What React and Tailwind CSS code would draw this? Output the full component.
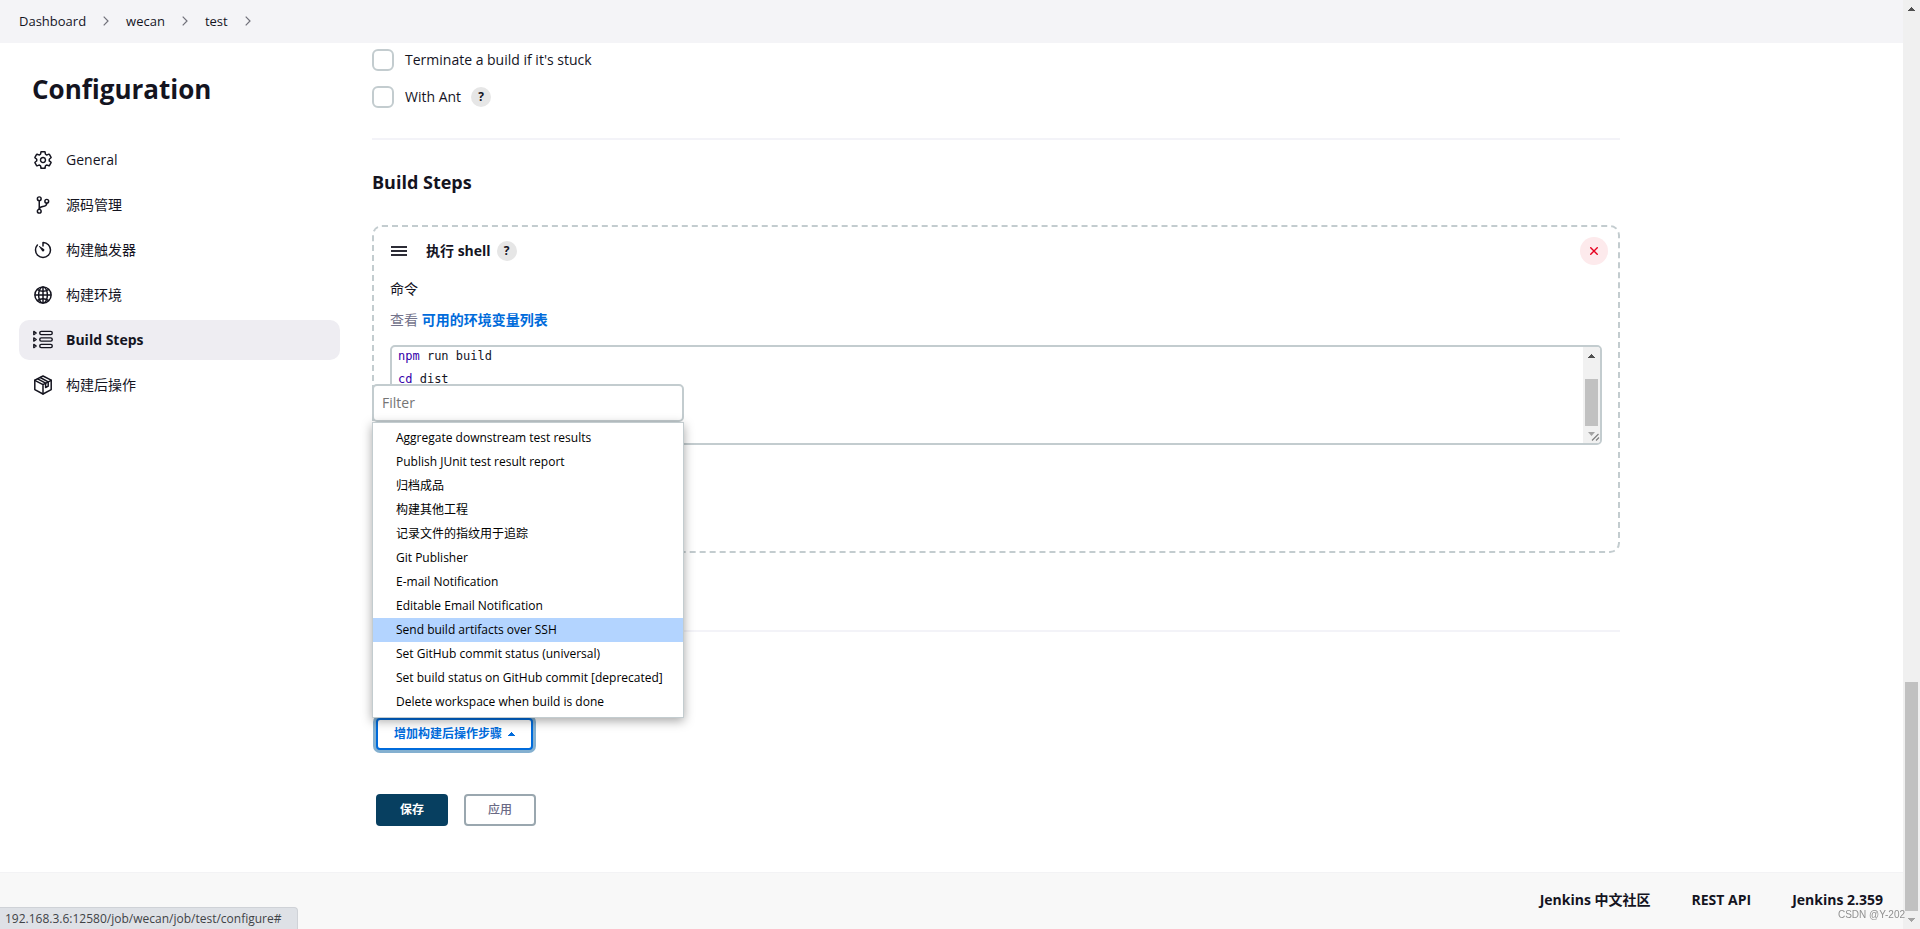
import React from "react";
import {
  IoSettingsOutline,
  IoGitBranchOutline,
  IoTimerOutline,
  IoGlobeOutline,
} from "react-icons/io5";

const crumbs = ["Dashboard", "wecan", "test"];

function StepsIcon() {
  return (
    <svg viewBox="0 0 20 20" className="h-5 w-5" fill="none" stroke="currentColor" strokeWidth="1.4" strokeLinejoin="round" aria-hidden="true">
      {[3, 9.5, 16].map((y) => (
        <g key={y}>
          <path d={`M0.8 ${y - 1.6}L3.2 ${y}L0.8 ${y + 1.6}Z`} />
          <rect x="6.8" y={y - 1.6} width="12.4" height="3.2" rx="1.4" />
        </g>
      ))}
    </svg>
  );
}

function PackageIcon() {
  return (
    <svg viewBox="0 0 20 20" className="h-5 w-5" fill="none" stroke="currentColor" strokeWidth="1.5" strokeLinejoin="round" strokeLinecap="round" aria-hidden="true">
      <path d="M10 1L18.2 5.2V14.6L10 19L1.8 14.6V5.2Z" />
      <path d="M1.8 5.4L10 9.6L18.2 5.4M10 9.6V19" />
      <path d="M4.6 3.9L12.6 8.2V12.6L15.2 11.2V6.8L7.2 2.5" />
    </svg>
  );
}

const outline = "h-5 w-5 [&_[stroke-width]]:[stroke-width:38px]";

const nav = [
  { label: "General", icon: <IoSettingsOutline className={outline} /> },
  { label: "源码管理", icon: <IoGitBranchOutline className={outline} /> },
  { label: "构建触发器", icon: <IoTimerOutline className={outline} /> },
  { label: "构建环境", icon: <IoGlobeOutline className={outline} /> },
  { label: "Build Steps", icon: <StepsIcon />, active: true },
  { label: "构建后操作", icon: <PackageIcon /> },
];

const postBuildActions = [
  "Aggregate downstream test results",
  "Publish JUnit test result report",
  "归档成品",
  "构建其他工程",
  "记录文件的指纹用于追踪",
  "Git Publisher",
  "E-mail Notification",
  "Editable Email Notification",
  "Send build artifacts over SSH",
  "Set GitHub commit status (universal)",
  "Set build status on GitHub commit [deprecated]",
  "Delete workspace when build is done",
];

function Arrow({ down, className = "" }) {
  return (
    <svg viewBox="0 0 7 4" className={`h-1 w-[7px] shrink-0 ${className}`} fill="currentColor" shapeRendering="crispEdges" aria-hidden="true">
      <path d={down ? "M0 0H7L3.5 4Z" : "M3.5 0L7 4H0Z"} />
    </svg>
  );
}

function Help() {
  return (
    <button type="button" aria-label="Help" className="flex h-5 w-5 items-center justify-center rounded-full bg-[#e6e6e6] text-xs font-bold">
      ?
    </button>
  );
}

function CheckRow({ id, label, help }) {
  return (
    <div className="flex h-[22px] items-center">
      <input id={id} type="checkbox" className="h-[22px] w-[22px] appearance-none rounded-md border-2 border-[#c3cccf] bg-white" />
      <label htmlFor={id} className="pl-[11px] pr-[10px]">{label}</label>
      {help && <Help />}
    </div>
  );
}

function PostBuildMenu() {
  return (
    <div className="absolute bottom-full -left-1 z-10 w-[312px]">
      <input
        type="text"
        aria-label="Filter"
        placeholder="Filter"
        className="block h-[38px] w-full rounded-[5px] border-2 border-[#c3cccf] bg-white px-2 pb-[2px] text-sm outline-none placeholder:text-[#757575]"
      />
      <ul className="border border-[#c3cccf] bg-white py-[3px] text-xs text-black shadow-[0_3px_10px_rgba(0,0,0,0.35)]">
        {postBuildActions.map((name) => (
          <li key={name}>
            <button
              type="button"
              className={`block h-6 w-full whitespace-nowrap pl-[23px] text-left ${name === "Send build artifacts over SSH" ? "bg-[#b3d4ff]" : ""}`}
            >
              {name}
            </button>
          </li>
        ))}
      </ul>
    </div>
  );
}

export default function App() {
  return (
    <div className="flex min-h-screen bg-white font-['Open_Sans','Noto_Sans_CJK_SC',sans-serif] text-sm text-[#14141f]">
      <div className="flex min-w-0 flex-1 flex-col">
        <nav aria-label="Breadcrumb" className="flex h-[43px] items-center bg-[#f4f4f7] pb-px pl-[19px] text-[13px]">
          {crumbs.map((c) => (
            <React.Fragment key={c}>
              <a href="#">{c}</a>
              <svg viewBox="0 0 6 10" className="mx-[17px] h-[10px] w-[6px]" fill="none" stroke="#70707a" strokeWidth="1.2" aria-hidden="true">
                <path d="M0.7 0.7L5 5L0.7 9.3" />
              </svg>
            </React.Fragment>
          ))}
        </nav>

        <div className="flex flex-1">
          <aside className="w-[340px] shrink-0 pl-[19px] pt-[26px]">
            <h1 className="pl-[13px] text-[26px] leading-10 font-bold">Configuration</h1>
            <ul className="mt-[31px] flex flex-col gap-[5px]">
              {nav.map((n) => (
                <li key={n.label}>
                  <a
                    href="#"
                    className={`flex h-10 items-center gap-[13px] rounded-[10px] pl-[14px] ${n.active ? "bg-[#eeedf2] font-bold" : ""}`}
                  >
                    {n.icon}
                    <span>{n.label}</span>
                  </a>
                </li>
              ))}
            </ul>
          </aside>

          <main className="max-w-[1280px] flex-1 pl-8 pt-[6px]">
            <div className="flex flex-col gap-[15px]">
              <CheckRow id="terminate" label="Terminate a build if it's stuck" />
              <CheckRow id="ant" label="With Ant" help />
            </div>

            <h2 className="mt-[30px] border-t-2 border-[#f3f3f8] pt-7 text-lg leading-7 font-bold">Build Steps</h2>

            <section className="mt-[29px] h-[328px] rounded-[10px] border-2 border-dashed border-[#c3cccf] px-4">
              <div className="flex h-12 items-center">
                <button type="button" aria-label="Reorder" className="ml-px flex w-4 flex-col gap-[2px]">
                  <span className="h-[2px] w-full bg-[#2c2c36]" />
                  <span className="h-[2px] w-full bg-[#2c2c36]" />
                  <span className="h-[2px] w-full bg-[#2c2c36]" />
                </button>
                <h3 className="ml-[19px] mr-[6px] font-bold">执行 shell</h3>
                <Help />
                <button type="button" aria-label="Delete" className="-mr-[6px] ml-auto flex h-7 w-7 items-center justify-center rounded-full bg-[#fdeaec]">
                  <svg viewBox="0 0 8 8" className="h-2 w-2" stroke="#e6001f" strokeWidth="1.4" aria-hidden="true">
                    <path d="M0.3 0.3L7.7 7.7M7.7 0.3L0.3 7.7" />
                  </svg>
                </button>
              </div>
              <p className="mt-[2px] h-6 leading-6" id="command-label">命令</p>
              <p className="mt-[7px] h-6 leading-6 text-[#73738c]">
                查看 <a href="#" className="font-bold text-[#006bdb]">可用的环境变量列表</a>
              </p>
              <div className="mt-[13px] flex h-[100px] overflow-hidden rounded-[5px] border-2 border-[#c3cccf]">
                <div
                  role="textbox"
                  aria-multiline="true"
                  aria-labelledby="command-label"
                  contentEditable
                  suppressContentEditableWarning
                  className="-mt-[2px] flex-1 whitespace-pre pl-[6px] font-['DejaVu_Sans_Mono',monospace] text-xs leading-[23px]"
                >
                  <div><span className="text-[#3300aa]">npm</span> run build</div>
                  <div><span className="text-[#3300aa]">cd</span> dist</div>
                </div>
                <div className="flex w-[17px] flex-col items-center bg-[#f1f1f1] pt-[7px]">
                  <Arrow className="text-[#505050]" />
                  <div className="mt-[21px] h-[47px] w-[13px] shrink-0 bg-[#c1c1c1]" />
                  <svg viewBox="0 0 17 15" className="mt-1 h-[15px] w-[17px] shrink-0" aria-hidden="true">
                    <path d="M5 2H12L8.500 6Z" fill="#a3a3a3" />
                    <path d="M9 10.500L15.500 4M13 10.500L16 7.500" stroke="#808080" strokeWidth="1.2" fill="none" />
                  </svg>
                </div>
              </div>
            </section>

            <div className="mt-[77px] border-t-2 border-[#f3f3f8] pl-1 pt-[86px]">
              <div className="relative w-fit">
                <button
                  type="button"
                  aria-expanded="true"
                  className="flex h-8 w-[157px] items-center justify-center gap-[6px] rounded border-2 border-[#006bdb] bg-white text-xs font-bold text-[#006bdb] shadow-[0_0_0_3px_#84b0d0]"
                >
                  增加构建后操作步骤
                  <Arrow />
                </button>
                <PostBuildMenu />
              </div>
              <div className="mt-11 flex gap-4">
                <button type="submit" className="h-8 w-[72px] rounded bg-[#073f60] text-xs font-bold text-white">保存</button>
                <button type="button" className="h-8 w-[72px] rounded border-2 border-[#9aa7af] bg-white text-xs font-medium text-[#6a6a85]">应用</button>
              </div>
            </div>
          </main>
        </div>

        <footer className="flex h-[57px] items-center justify-end gap-[41px] border-t border-[#f3f3f5] bg-[#f8f8f8] pr-[20px] pb-[2px] font-bold">
          <a href="#">Jenkins 中文社区</a>
          <a href="#">REST API</a>
          <a href="#">Jenkins 2.359</a>
        </footer>
      </div>

      <div aria-hidden="true" className="flex w-[17px] shrink-0 flex-col items-center bg-[#f0f0f0] py-[7px]">
        <Arrow className="text-[#505050]" />
        <div className="mt-auto mb-[7px] h-[229px] w-[13px] bg-[#c1c1c1]" />
        <Arrow down className="text-[#a3a3a3]" />
      </div>

      <div className="fixed bottom-0 left-0 flex h-[22px] items-center rounded-tr border-t border-r border-[#cfd2d7] bg-[#dee1e6] pl-[5px] pr-4 text-xs text-[#3f4347]">
        192.168.3.6:12580/job/wecan/job/test/configure#
      </div>
      <div className="fixed right-[15px] bottom-[6px] font-['Liberation_Sans',sans-serif] text-[10px] leading-4 text-[#909090]">
        CSDN @Y-202
      </div>
    </div>
  );
}
